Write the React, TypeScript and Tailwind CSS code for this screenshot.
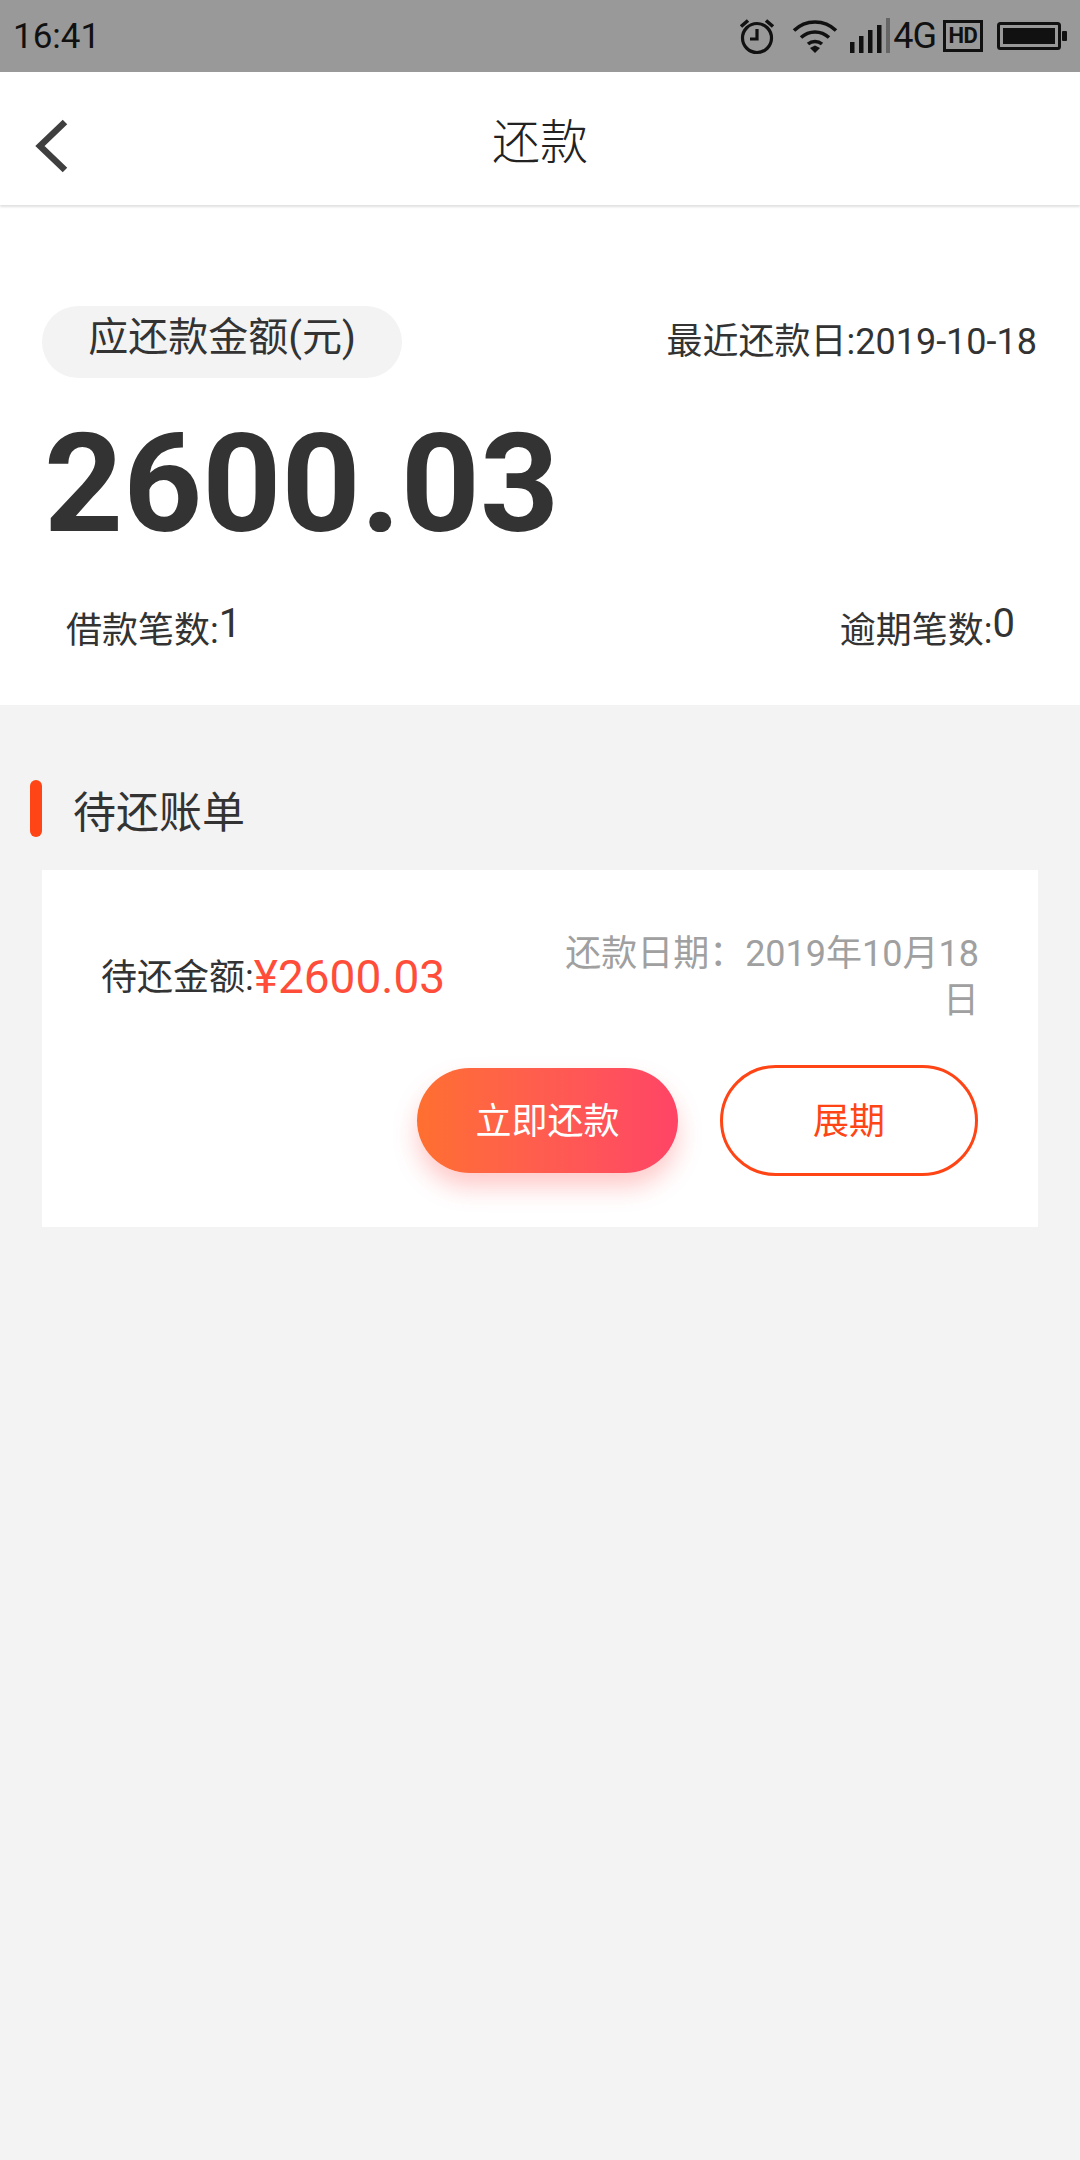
const font = { fontFamily: "Roboto, 'Noto Sans CJK SC', sans-serif" };

function Back() {
  return (
    <svg width="34" height="54" viewBox="0 0 34 54" fill="none" stroke="#3f3f3f" strokeWidth="6.5">
      <path d="M31 3 6 27l25 24" />
    </svg>
  );
}

function Alarm() {
  return (
    <svg width="38" height="38" viewBox="0 0 38 38" fill="none" stroke="#111" strokeWidth="3.2">
      <circle cx="19" cy="21" r="14.5" />
      <path d="M19 12v10h-7" />
      <path d="M3 9.5 10 3.5M35 9.5 28 3.5" strokeWidth="3.6" />
    </svg>
  );
}

function Wifi() {
  return (
    <svg width="46" height="34" viewBox="0 0 46 34" fill="none" stroke="#111" strokeWidth="3.5">
      <path d="M2 11.5C13.5 0 32.5 0 44 11.5" />
      <path d="M9 18.5c8-7.5 20-7.5 28 0" />
      <path d="M16 25c4-3.5 10-3.5 14 0" />
      <path d="M18 29 23 26.5 28 29 23 34Z" fill="#111" stroke="none" />
    </svg>
  );
}

function Signal() {
  return (
    <svg width="40" height="36" viewBox="0 0 40 36" fill="#111">
      <rect x="0" y="24" width="4.5" height="11" />
      <rect x="9" y="18" width="4.5" height="17" />
      <rect x="18" y="12" width="4.5" height="23" />
      <rect x="27" y="7" width="4.5" height="28" />
      <rect x="36" y="0" width="4" height="35" fill="#666" />
    </svg>
  );
}

function Battery() {
  return (
    <svg width="70" height="28" viewBox="0 0 70 28">
      <rect x="1.5" y="1.5" width="61" height="25" rx="2" fill="none" stroke="#111" strokeWidth="3" />
      <rect x="6" y="6" width="52" height="16" fill="#111" />
      <rect x="65" y="9" width="5" height="10" rx="1" fill="#111" />
    </svg>
  );
}

export default function App() {
  return (
    <div className="flex min-h-[2160px] w-[1080px] flex-col bg-[#f3f3f3] text-[#333]" style={font}>
      <div className="flex h-[72px] items-center justify-between bg-[#999] pl-[13px] pr-[13px] text-[#111]">
        <span className="text-[35px] leading-none">16:41</span>
        <div className="flex items-center">
          <Alarm />
          <div className="ml-[16px]"><Wifi /></div>
          <div className="ml-[12px]"><Signal /></div>
          <span className="ml-[3px] text-[36px] leading-none tracking-[-1px]">4G</span>
          <span className="ml-[7px] flex h-[32px] w-[40px] items-center justify-center border-[3.5px] border-[#111] text-[22px] font-bold leading-none tracking-[-0.5px]">HD</span>
          <div className="ml-[14px]"><Battery /></div>
        </div>
      </div>

      <div className="relative flex h-[133px] items-center justify-center bg-white pt-[8px] shadow-[0_2px_2px_rgba(0,0,0,0.12)]">
        <div className="absolute left-[34px] top-[47px]"><Back /></div>
        <span className="text-[48px] font-light leading-none text-[#222]">还款</span>
      </div>

      <div className="h-[500px] bg-white px-[42px] pt-[101px]">
        <div className="flex items-center justify-between">
          <div className="flex h-[72px] w-[360px] items-center justify-center rounded-full bg-[#f3f3f3] pb-[8px] text-[40px]">应还款金额(元)</div>
          <span className="-translate-x-[1px] text-[36px]">最近还款日:2019-10-18</span>
        </div>
        <div className="mt-[24px] pl-[2px] text-[138px] font-bold leading-[164px]">2600.03</div>
        <div className="mt-[34px] flex justify-between px-[24px] text-[36px]">
          <span>借款笔数:<span className="relative -top-[6px] text-[40px]">1</span></span>
          <span className="-mr-[1px]">逾期笔数:<span className="relative -top-[6px] text-[40px]">0</span></span>
        </div>
      </div>

      <div className="mt-[75px] flex items-center">
        <div className="ml-[30px] h-[57px] w-[12px] rounded-full bg-[#ff4515]" />
        <span className="ml-[31px] pt-[10px] text-[43px] leading-none">待还账单</span>
      </div>

      <div className="mx-[42px] mt-[33px] h-[357px] bg-white px-[60px] pt-[61px]">
        <div className="flex items-center justify-between">
          <div className="-ml-[1px] flex items-center text-[36px]">
            <span>待还金额:</span>
            <span className="-translate-y-[1px] text-[46px] text-[#ff4d3a]">¥2600.03</span>
          </div>
          <div className="-mr-[1px] w-[420px] text-right text-[36px] leading-[47px] text-[#a0a0a0]">还款日期：2019年10月18日</div>
        </div>
        <div className="mt-[40px] flex items-center justify-end gap-[42px] text-[36px]">
          <button className="h-[105px] w-[261px] rounded-full bg-gradient-to-r from-[#ff6f2f] to-[#ff4466] pt-[2px] text-white shadow-[0_14px_24px_rgba(255,80,80,0.3)]">立即还款</button>
          <button className="h-[111px] w-[258px] rounded-full border-[3px] border-[#ff4515] pt-[2px] text-[#ff4515]">展期</button>
        </div>
      </div>
    </div>
  );
}
